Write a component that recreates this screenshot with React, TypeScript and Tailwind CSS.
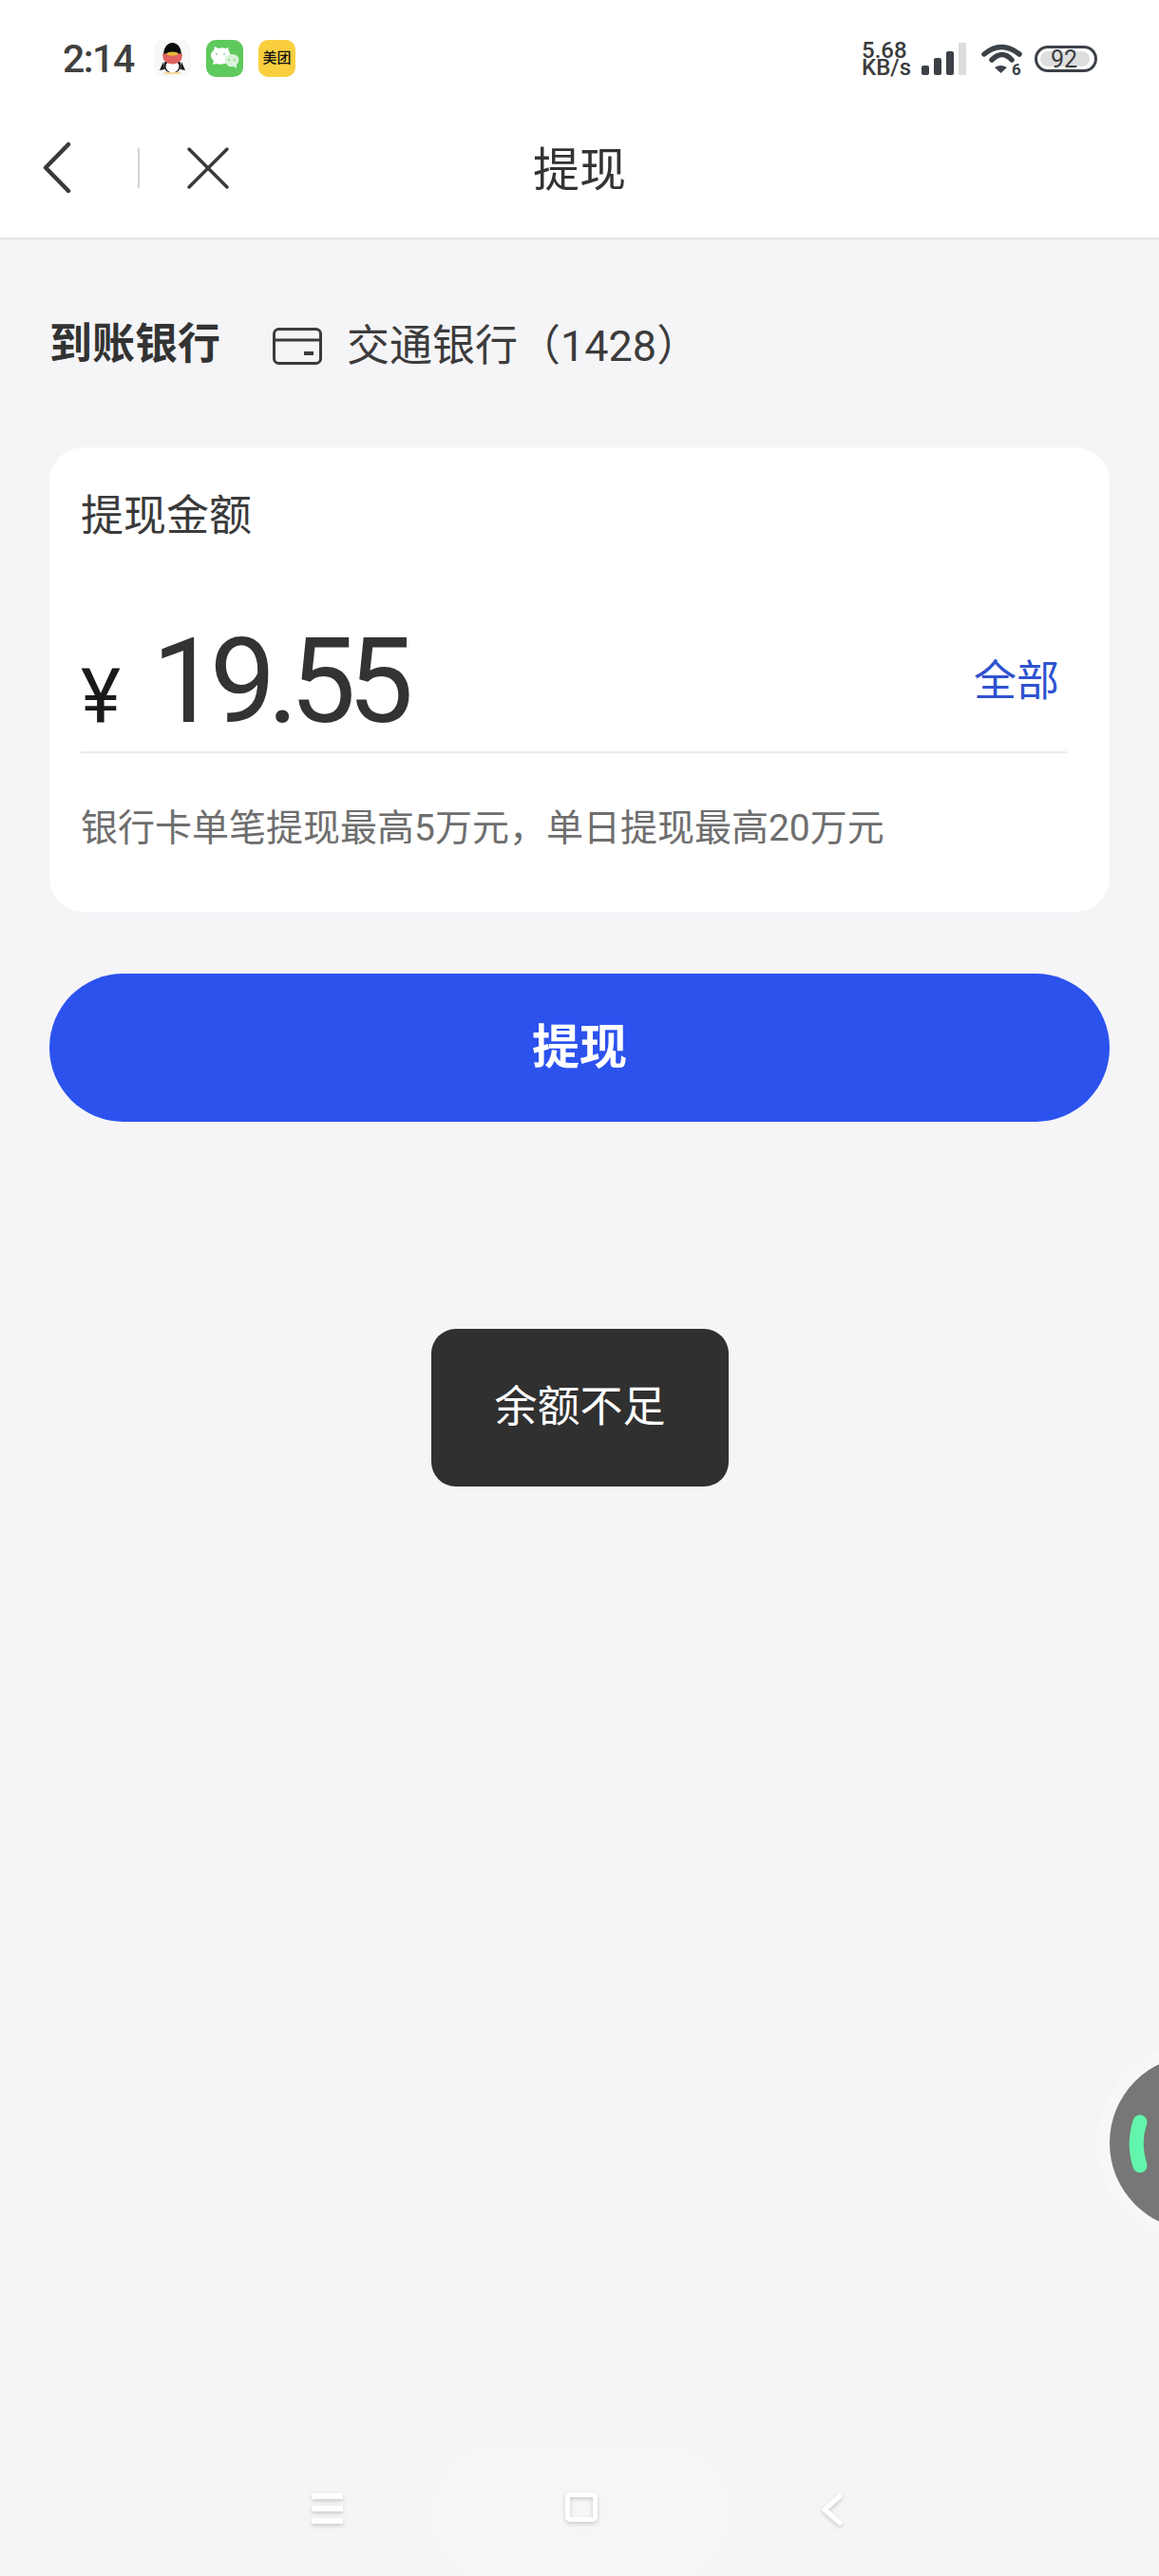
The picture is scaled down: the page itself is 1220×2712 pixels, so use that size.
const cjk = "font-['Roboto','Noto_Sans_CJK_SC',sans-serif]";

function QQIcon() {
  return (
    <div className="w-[39px] h-[39px] rounded-[10px] bg-[#f7f8f8]">
      <svg width="39" height="39" viewBox="0 0 39 39">
        <ellipse cx="19.500" cy="15" rx="9.500" ry="12" fill="#0b0b0b" />
        <path d="M10 23 L6 32 L11 31 Z M29 23 L33 32 L28 31 Z" fill="#111" />
        <ellipse cx="19.500" cy="27" rx="9" ry="8" fill="#111" />
        <ellipse cx="19.500" cy="28" rx="7" ry="6.500" fill="#fff" />
        <path d="M9 15 Q19.500 12 30 15 L29 21 Q19.500 30 10 21 Z" fill="#e0625f" />
        <ellipse cx="19.500" cy="14.500" rx="6" ry="2" fill="#e8b93a" />
        <path d="M11 35 H28" stroke="#f5d99a" strokeWidth="2" />
      </svg>
    </div>
  );
}

function WechatIcon() {
  return (
    <div className="w-[39px] h-[39px] rounded-[10px] bg-[#5ec95c]">
      <svg width="39" height="39" viewBox="0 0 39 39">
        <path d="M9 7 L13 9 C16 8 18 8 20 9 L23 8 L24 12 C27 16 26 21 22 24 C18 26 14 26 11 25 L7 26 L8 22 C4 19 4 13 8 11 Z" fill="#fff" />
        <path d="M27 15 C22 15 19 19 20 23 C21 27 25 29 29 28 L32 30 L32 26 C35 24 35 19 33 17 C32 16 29 15 27 15 Z" fill="#d9f3d8" />
        <circle cx="11" cy="15" r="1.200" fill="#b5d8c0" />
        <circle cx="19" cy="15" r="1.200" fill="#b5d8c0" />
        <circle cx="24" cy="21" r="1" fill="#7fcf88" />
        <circle cx="30" cy="21" r="1" fill="#7fcf88" />
      </svg>
    </div>
  );
}

function MeituanIcon() {
  return (
    <div className={`w-[39px] h-[39px] rounded-[10px] bg-[#f9cf3f] flex items-center justify-center text-[15px] font-medium leading-none text-[#111] ${cjk}`}>
      美团
    </div>
  );
}

function StatusBar() {
  return (
    <div className="h-[122px] flex items-center justify-between pl-[66px] pr-[65px] bg-white">
      <div className="flex items-center">
        <span className="mt-[2px] text-[41px] leading-none font-medium text-[#404040] font-['Roboto',sans-serif] w-[98px] tracking-[-1.5px]">2:14</span>
        <div className="flex gap-[16px] -ml-[2px]">
          <QQIcon />
          <WechatIcon />
          <MeituanIcon />
        </div>
      </div>
      <div className="flex items-center mt-[2px]">
        <div className="flex flex-col text-[#3c3c3c] font-['Roboto',sans-serif] font-medium text-[24px] leading-[18px] w-[63px]">
          <span>5.68</span>
          <span>KB/s</span>
        </div>
        <svg width="47" height="34" viewBox="0 0 47 34">
          <rect y="24" width="8" height="10" rx="2" fill="#3c4148" />
          <rect x="13" y="16" width="8" height="18" rx="2" fill="#3c4148" />
          <rect x="26" y="9" width="8" height="25" rx="2" fill="#3c4148" />
          <rect x="39" width="8" height="34" rx="1" fill="#dcdcdc" />
        </svg>
        <svg className="ml-[15px] mt-[2px]" width="48" height="40" viewBox="0 0 48 40">
          <path d="M4 14 Q22 -1 41 14" fill="none" stroke="#3c4148" strokeWidth="5.500" strokeLinecap="round" />
          <path d="M12 20 Q23 9 33 20" fill="none" stroke="#3c4148" strokeWidth="5.500" strokeLinecap="round" />
          <path d="M15 28 Q21.500 24 28 28 L21.500 34 Z" fill="#3c4148" />
          <text x="33" y="36" fontSize="17" fontWeight="700" fill="#3c4148" fontFamily="Roboto, sans-serif">6</text>
        </svg>
        <div className="ml-[9px] w-[66px] h-[28px] rounded-full border-[3px] border-[#3c4148] relative overflow-hidden flex items-center justify-center pr-[4px]">
          <div className="absolute left-[3px] top-[3px] bottom-[3px] w-[52px] rounded-[8px] bg-[#dedede]" />
          <span className="relative text-[25px] leading-none text-[#3c3c3c] font-['Roboto',sans-serif]">92</span>
        </div>
      </div>
    </div>
  );
}

function NavBar() {
  return (
    <div className="h-[132px] pb-[13px] relative bg-white border-b-[3px] border-[#e9e9ec] flex items-center justify-center -mt-px">
      <div className="absolute left-[45px] top-[28px] flex items-center">
        <svg width="30" height="56" viewBox="0 0 30 56">
          <path d="M27 3 L3 27.500 L27 52" fill="none" stroke="#3a3a3a" strokeWidth="4.500" strokeLinecap="round" strokeLinejoin="round" />
        </svg>
        <div className="w-[2px] h-[42px] bg-[#d4d4d4] ml-[70px]" />
        <svg className="ml-[49px]" width="46" height="46" viewBox="0 0 46 46">
          <path d="M3 3 L43 43 M43 3 L3 43" fill="none" stroke="#3a3a3a" strokeWidth="3.500" strokeLinecap="round" />
        </svg>
      </div>
      <span className={`text-[49px] leading-none text-[#333] ${cjk}`}>提现</span>
    </div>
  );
}

function BankRow() {
  return (
    <div className="h-[218px] flex items-center pl-[52px]">
      <span className={`text-[45px] leading-none font-bold text-[#333] w-[235px] ${cjk}`}>到账银行</span>
      <svg className="mt-[5px]" width="52" height="39" viewBox="0 0 52 39">
        <rect x="1.500" y="1.500" width="49" height="36" rx="5" fill="none" stroke="#3a3a3a" strokeWidth="3" />
        <path d="M2 13 H50" stroke="#3a3a3a" strokeWidth="3" />
        <rect x="33" y="25" width="10" height="4" fill="#3a3a3a" />
      </svg>
      <span className={`ml-[26px] mt-[4px] text-[45px] leading-none text-[#3c3c3c] ${cjk}`}>交通银行（1428）</span>
    </div>
  );
}

function AmountCard() {
  return (
    <div className="mx-[52px] h-[489px] rounded-[36px] bg-white pl-[33px] pr-[45px] pt-[51px]">
      <div className={`text-[45px] leading-[44px] text-[#3a3a3a] ${cjk}`}>提现金额</div>
      <div className="h-[227px] flex items-end justify-between border-b-2 border-[#ececee] pr-[8px]">
        <div className="flex items-end pb-[14px]">
          <span className="text-[80px] leading-none text-[#1a1a1a] font-['Roboto',sans-serif] w-[75px] pb-[3px]">¥</span>
          <span className="text-[124px] leading-[118px] tracking-[-9px] text-[#333] font-['Roboto',sans-serif]">19.55</span>
        </div>
        <span className={`text-[45px] leading-none text-[#2f52d0] pb-[51px] ${cjk}`}>全部</span>
      </div>
      <div className={`mt-[60px] text-[39px] leading-none text-[#6e6e6e] ${cjk}`}>银行卡单笔提现最高5万元，单日提现最高20万元</div>
    </div>
  );
}

function BottomNav() {
  return (
    <div className="absolute bottom-0 left-0 right-0 h-[152px]">
      <div className="absolute left-[452px] top-[12px] w-[318px] h-[150px] rounded-[90px] bg-[#f6f6f7]" />
      <div className="relative h-full flex items-start pt-[65px] pl-[328px]">
        <div className="w-[33px] flex flex-col gap-[7px] drop-shadow-[0_2px_2px_rgba(0,0,0,0.18)]">
          <div className="h-[6px] bg-white" />
          <div className="h-[6px] bg-white" />
          <div className="h-[6px] bg-white" />
        </div>
        <div className="ml-[234px] -mt-[1px] w-[34px] h-[31px] rounded-[5px] border-[5px] border-white drop-shadow-[0_2px_2px_rgba(0,0,0,0.18)]" />
        <svg className="ml-[233px] drop-shadow-[0_2px_2px_rgba(0,0,0,0.18)]" width="26" height="38" viewBox="0 0 26 38">
          <path d="M22 3 L6 17 L22 31" fill="none" stroke="#fff" strokeWidth="5" strokeLinecap="round" strokeLinejoin="round" />
        </svg>
      </div>
    </div>
  );
}

export default function App() {
  return (
    <div className="w-[1220px] h-[2712px] relative overflow-hidden bg-[#f5f5f8]">
      <StatusBar />
      <NavBar />
      <BankRow />
      <AmountCard />
      <button className={`mt-[65px] mx-[52px] block w-[1116px] h-[156px] rounded-full bg-[#2c52ee] text-white text-[50px] font-bold ${cjk}`}>
        提现
      </button>

      {/* toast */}
      <div className={`absolute left-[454px] top-[1399px] w-[313px] h-[166px] rounded-[26px] bg-[#303030] flex items-center justify-center text-white text-[45px] ${cjk}`}>
        余额不足
      </div>

      {/* floating ball */}
      <div className="absolute left-[1168px] top-[2164px] w-[184px] h-[184px] rounded-full bg-[#777777] ring-[13px] ring-[#f7f7f9]">
        <svg className="absolute left-[16px] top-[58px]" width="30" height="70" viewBox="0 0 30 70">
          <path d="M16 12 C11 27 11 43 16 58" fill="none" stroke="#62f5ac" strokeWidth="15" strokeLinecap="round" />
        </svg>
      </div>

      <BottomNav />
    </div>
  );
}
